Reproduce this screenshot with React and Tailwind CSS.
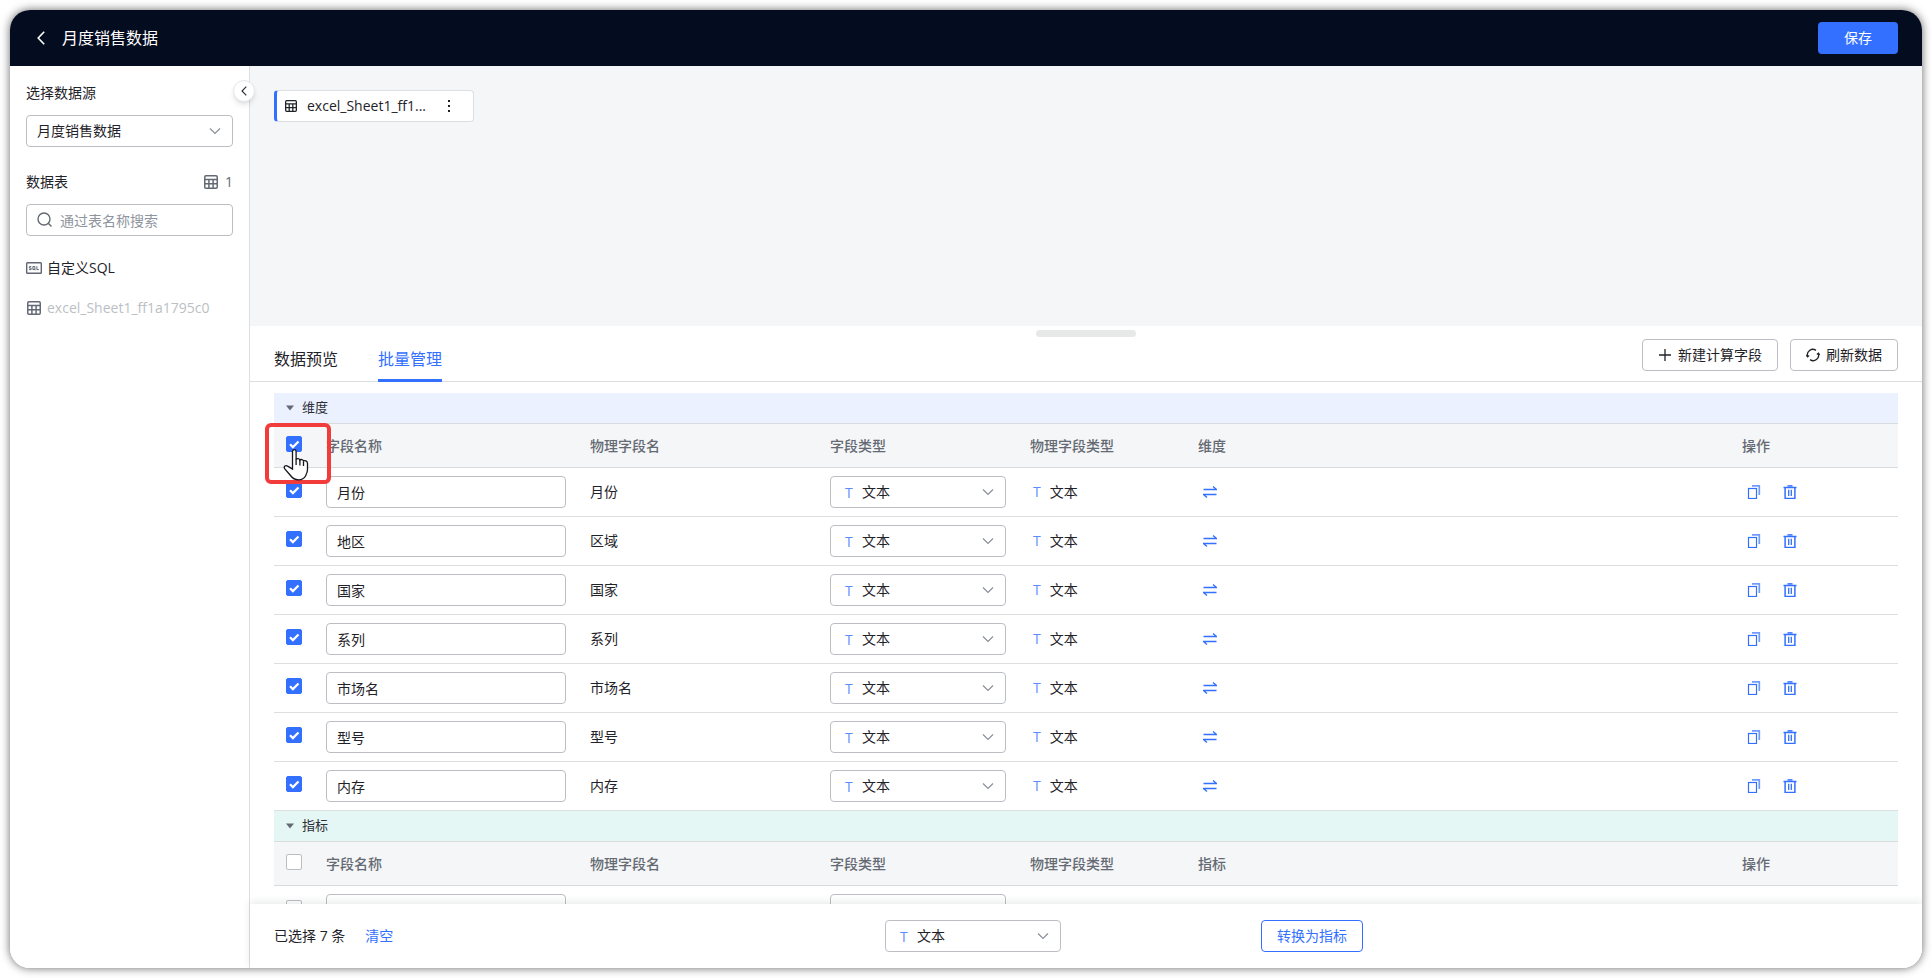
import { useState } from 'react';

const DIMENSIONS = [
  { id: 1, name: '月份', physical: '月份' },
  { id: 2, name: '地区', physical: '区域' },
  { id: 3, name: '国家', physical: '国家' },
  { id: 4, name: '系列', physical: '系列' },
  { id: 5, name: '市场名', physical: '市场名' },
  { id: 6, name: '型号', physical: '型号' },
  { id: 7, name: '内存', physical: '内存' },
];

const METRICS = [{ id: 8, name: '', physical: '' }];

function TableIcon({ className }) {
  return (
    <svg viewBox="0 0 14 14" fill="none" stroke="currentColor" strokeWidth="1.5" className={className}>
      <rect x="0.75" y="0.75" width="12.5" height="12.5" rx="1.2" />
      <path d="M0.7 4.5h12.6M0.7 8.8h12.6M4.9 4.5v8.8M9.1 4.5v8.8" />
    </svg>
  );
}

function SqlIcon() {
  return (
    <svg viewBox="0 0 16 14" fill="none" stroke="#5f6672" className="h-[14px] w-4 shrink-0">
      <rect x="0.7" y="1.7" width="14.600" height="10.600" rx="0.8" strokeWidth="1.4" />
      <path d="M5.3 5.6H3.4v1.5h1.7v1.5H3.1M6.9 5.6h2v3h-2zM8.2 7.8l1.2 1.4M10.9 5.2v3.400h2" strokeWidth="1" />
    </svg>
  );
}

function Chevron({ className }) {
  return (
    <svg viewBox="0 0 12 12" fill="none" stroke="#8a9099" strokeWidth="1.2" className={className}>
      <path d="M1 3.5 6 8.5l5-5" />
    </svg>
  );
}

function LeftIcon({ className }) {
  return (
    <svg viewBox="0 0 8 14" fill="none" stroke="currentColor" strokeWidth="1.6" className={className}>
      <path d="M7.2 0.8 1.2 7l6 6.2" />
    </svg>
  );
}

function SwapIcon() {
  return (
    <svg viewBox="0 0 14 14" fill="none" stroke="currentColor" strokeWidth="1.3" className="size-[14px]">
      <path d="M0.5 4.500h13L10 1.400M13.5 9.500H0.5L4 12.600" />
    </svg>
  );
}

function CopyIcon() {
  return (
    <svg viewBox="0 0 14 14" fill="none" stroke="currentColor" className="size-[14px]">
      <rect x="1.500" y="3.500" width="8" height="10" strokeWidth="1.200" />
      <path d="M5 0.900h7.300v9.100" strokeWidth="1.700" opacity="0.7" />
    </svg>
  );
}

function TrashIcon() {
  return (
    <svg viewBox="0 0 14 14" fill="none" stroke="currentColor" className="size-[14px]">
      <path d="M0.500 2.500h13M2.100 2.500v10.900h9.800v-10.900" strokeWidth="1.500" />
      <path d="M4.500 0.900h5" strokeWidth="1.500" />
      <path d="M5.700 4.800v6.200M8.300 4.800v6.200" strokeWidth="1.300" />
    </svg>
  );
}

function Checkbox({ checked, onChange, label }) {
  return (
    <span className="relative mb-1 block size-4">
      <input
        type="checkbox"
        aria-label={label}
        checked={checked}
        onChange={onChange}
        className="block size-4 appearance-none rounded-xs border border-[#bbbfc4] bg-white checked:border-[#3370ff] checked:bg-[#3370ff]"
      />
      {checked && (
        <svg viewBox="0 0 16 16" fill="none" stroke="#fff" strokeWidth="2.200" className="pointer-events-none absolute inset-0 size-4">
          <path d="m4 8.200 2.900 2.900 5.600-5.600" />
        </svg>
      )}
    </span>
  );
}

function TypeSelect({ label, empty }) {
  return (
    <div className="relative w-44">
      {!empty && (
        <span className="pointer-events-none absolute top-[7px] left-[15px] text-sm leading-5 font-medium text-[#5c8dff]">T</span>
      )}
      <select
        aria-label={label}
        className="block h-8 w-full appearance-none rounded-sm border border-[#bbbfc4] bg-white pr-8 pl-[31px] text-sm text-[#1f2329]"
      >
        {empty && <option></option>}
        <option>文本</option>
        <option>数值</option>
        <option>日期</option>
      </select>
      <Chevron className="pointer-events-none absolute top-[10px] right-3 size-3" />
    </div>
  );
}

function ClickHint() {
  return (
    <div className="pointer-events-none absolute -top-px -left-[9px] z-10 h-[61px] w-[66px] rounded-md border-4 border-[#f23c3c]">
      <svg viewBox="0 0 26 32" className="absolute top-[22px] left-[14px] h-8 w-[26px]">
        <path
          d="M9.500 2.500c0-2.400 3.600-2.400 3.600 0v8c.6-1.400 3.600-1.200 3.800.6.8-1 3.400-.8 3.600.9 1.200-.8 4-.3 4 2.400v6c0 3-.9 4.400-2 6.600-1.200 2.400-3.500 3.800-7 3.800-4 0-6-1.500-8-4.300L1.800 19.800c-1.500-2.200.8-4.100 2.800-2.700l4.900 3z"
          fill="#fff"
          stroke="#16161f"
          strokeWidth="1.300"
        />
        <path d="M13.100 10v6M16.900 11v5.500M20.500 12.500V17" stroke="#16161f" strokeWidth="1.300" />
      </svg>
    </div>
  );
}

function FieldSection({ title, titleClass, rows, selected, onToggle, onToggleAll, hint }) {
  const allChecked = rows.every((row) => selected.includes(row.id));

  return (
    <section>
      <h2>
        <button className={`flex h-[30px] w-full items-center gap-2 pl-3 text-[13px] text-[#2b2f36] ${titleClass}`}>
          <svg viewBox="0 0 8 6" className="h-[6px] w-2" fill="#646a73">
            <path d="M0 0.500h8L4 5.500z" />
          </svg>
          {title}
        </button>
      </h2>
      <table className="w-full table-fixed border-separate border-spacing-0 text-left text-sm text-[#1f2329]">
        <thead className="bg-[#f5f6f7] text-[#646a73]">
          <tr className="h-[45px] *:border-y *:border-[#d9dbde] *:px-3 *:py-0 *:font-medium">
            <th className="relative w-10">
              <Checkbox checked={allChecked} onChange={onToggleAll} label={`全选${title}`} />
              {hint && <ClickHint />}
            </th>
            <th className="w-[264px]">字段名称</th>
            <th className="w-60">物理字段名</th>
            <th className="w-[200px]">字段类型</th>
            <th className="w-[168px]">物理字段类型</th>
            <th>{title}</th>
            <th className="w-[168px]">操作</th>
          </tr>
        </thead>
        <tbody>
          {rows.map((row) => (
            <tr key={row.id} className="h-[49px] *:border-b *:border-[#dcdee1] *:px-3 *:py-0">
              <td>
                <Checkbox checked={selected.includes(row.id)} onChange={() => onToggle(row.id)} label={`选择${row.name}`} />
              </td>
              <td>
                <input
                  aria-label={`${row.name}字段名称`}
                  defaultValue={row.name}
                  className="block h-8 w-full rounded-sm border border-[#bbbfc4] bg-white px-[10px]"
                />
              </td>
              <td>{row.physical}</td>
              <td>
                <TypeSelect label={`${row.name}字段类型`} empty={!row.name} />
              </td>
              <td>
                {row.physical && (
                  <>
                    <span className="mr-[9px] ml-[3px] font-medium text-[#5c8dff]">T</span>
                    文本
                  </>
                )}
              </td>
              <td>
                {row.name && (
                  <button aria-label="转换" className="ml-[5px] block text-[#3370ff]">
                    <SwapIcon />
                  </button>
                )}
              </td>
              <td>
                {row.name && (
                  <div className="flex gap-[22px] pl-[5px] text-[#3370ff]">
                    <button aria-label="复制">
                      <CopyIcon />
                    </button>
                    <button aria-label="删除">
                      <TrashIcon />
                    </button>
                  </div>
                )}
              </td>
            </tr>
          ))}
        </tbody>
      </table>
    </section>
  );
}

function Sidebar() {
  return (
    <aside className="relative w-60 shrink-0 border-r border-[#dcdee1] bg-white px-4 pt-4 text-sm text-[#1f2329]">
      <button
        aria-label="收起"
        className="absolute top-[14px] -right-[6px] z-10 flex size-[22px] items-center justify-center rounded-full border border-[#e4e6e9] bg-white text-[#2b2f36] shadow-md"
      >
        <LeftIcon className="h-[10px] w-[6px]" />
      </button>
      <label htmlFor="source" className="block leading-[22px]">
        选择数据源
      </label>
      <div className="relative mt-[11px]">
        <select id="source" className="block h-8 w-full appearance-none rounded-sm border border-[#bbbfc4] bg-white px-[10px]">
          <option>月度销售数据</option>
        </select>
        <Chevron className="pointer-events-none absolute top-[10px] right-3 size-3" />
      </div>
      <div className="mt-6 flex items-center leading-[22px]">
        <label htmlFor="search" className="flex-1">
          数据表
        </label>
        <TableIcon className="size-[14px] text-[#646a73]" />
        <span className="ml-[7px] text-[#646a73]">1</span>
      </div>
      <div className="relative mt-[11px]">
        <svg viewBox="0 0 16 16" fill="none" stroke="#646a73" strokeWidth="1.400" className="absolute top-2 left-[11px] size-4">
          <circle cx="7" cy="7" r="6" />
          <path d="m11.200 11.200 3.300 3.300" />
        </svg>
        <input
          id="search"
          placeholder="通过表名称搜索"
          className="block h-8 w-full rounded-sm border border-[#bbbfc4] pl-[33px] placeholder:text-[#8f959e]"
        />
      </div>
      <ul className="mt-3">
        <li className="flex h-10 items-center gap-[5px]">
          <SqlIcon />
          自定义SQL
        </li>
        <li className="flex h-10 items-center gap-[6px] pl-px text-[#bbbfc4]">
          <TableIcon className="size-[14px] text-[#646a73]" />
          excel_Sheet1_ff1a1795c0
        </li>
      </ul>
    </aside>
  );
}

export default function App() {
  const [selected, setSelected] = useState(DIMENSIONS.map((d) => d.id));

  const toggle = (id) => setSelected((cur) => (cur.includes(id) ? cur.filter((x) => x !== id) : [...cur, id]));

  const toggleAll = (rows) => {
    const ids = rows.map((row) => row.id);
    const all = ids.every((id) => selected.includes(id));
    const rest = selected.filter((id) => !ids.includes(id));
    setSelected(all ? rest : [...rest, ...ids]);
  };

  return (
    <div className="h-screen bg-white p-[10px] font-['Open_Sans','Noto_Sans_CJK_SC',sans-serif]">
      <div className="flex h-full flex-col overflow-hidden rounded-[20px] shadow-[0_0_10px_rgba(0,0,0,0.6)]">
        <header className="flex h-14 shrink-0 items-center bg-[#040c1f] px-6 text-white">
          <button aria-label="返回" className="ml-[3px]">
            <LeftIcon className="h-[14px] w-2" />
          </button>
          <h1 className="ml-[17px] flex-1 text-base">月度销售数据</h1>
          <button className="h-8 w-20 rounded-sm bg-[#3370ff] text-sm">保存</button>
        </header>

        <div className="flex min-h-0 flex-1">
          <Sidebar />

          <main className="flex min-w-0 flex-1 flex-col bg-white">
            <div className="h-[260px] shrink-0 bg-[#f5f6f7] px-6 pt-6">
              <div className="flex h-8 w-[200px] items-center rounded-sm border border-l-3 border-[#dcdee1] border-l-[#3370ff] bg-white text-sm text-[#1f2329]">
                <TableIcon className="ml-2 size-3 shrink-0" />
                <span className="ml-[10px] w-[122px] whitespace-nowrap">excel_Sheet1_ff1...</span>
                <button aria-label="更多" className="ml-[18px]">
                  <svg viewBox="0 0 4 12" className="h-3 w-1" fill="currentColor">
                    <path d="M1 0h2v2H1zM1 5h2v2H1zM1 10h2v2H1z" />
                  </svg>
                </button>
              </div>
            </div>

            <div className="relative flex h-14 shrink-0 items-end border-b border-[#dcdee1] px-6">
              <div className="absolute top-1 left-1/2 h-[7px] w-[100px] -translate-x-1/2 rounded-full bg-[#e7e9e8]" />
              <nav className="-mb-px flex gap-10 text-base">
                <button className="h-[43px] border-b-3 border-transparent text-[#1f2329]">数据预览</button>
                <button className="h-[43px] border-b-3 border-[#3370ff] text-[#3370ff]">批量管理</button>
              </nav>
              <div className="mb-[10px] ml-auto flex gap-3 text-sm text-[#1f2329]">
                <button className="flex h-8 items-center gap-[6px] rounded-sm border border-[#bbbfc4] px-[15px]">
                  <svg viewBox="0 0 14 14" stroke="currentColor" strokeWidth="1.300" className="size-[14px]">
                    <path d="M7 1v12M1 7h12" />
                  </svg>
                  新建计算字段
                </button>
                <button className="flex h-8 items-center gap-[6px] rounded-sm border border-[#bbbfc4] px-[15px]">
                  <svg viewBox="0 0 14 14" fill="none" stroke="currentColor" strokeWidth="1.300" className="size-[14px]">
                    <path d="M1.600 8.600A5.500 5.500 0 0 1 10 2.400M12.400 5.400A5.500 5.500 0 0 1 4 11.600" />
                    <path d="M0.300 7.200l1.300 1.600 1.500-1.200M13.700 6.800l-1.300-1.600-1.500 1.200" />
                  </svg>
                  刷新数据
                </button>
              </div>
            </div>

            <div className="min-h-0 flex-1 overflow-hidden px-6 pt-[11px]">
              <FieldSection
                title="维度"
                titleClass="bg-[#ebf1ff]"
                rows={DIMENSIONS}
                selected={selected}
                onToggle={toggle}
                onToggleAll={() => toggleAll(DIMENSIONS)}
                hint
              />
              <FieldSection
                title="指标"
                titleClass="bg-[#e5f7f4]"
                rows={METRICS}
                selected={selected}
                onToggle={toggle}
                onToggleAll={() => toggleAll(METRICS)}
              />
            </div>

            <footer className="z-10 flex h-16 shrink-0 items-center bg-white px-6 text-sm shadow-[0_-2px_8px_rgba(31,35,41,0.1)]">
              <div className="flex w-[611px] gap-5">
                <span className="text-[#1f2329]">已选择 {selected.length} 条</span>
                <button className="text-[#3370ff]" onClick={() => setSelected([])}>
                  清空
                </button>
              </div>
              <TypeSelect label="批量字段类型" />
              <button className="ml-[200px] h-8 rounded-sm border border-[#3370ff] px-[15px] text-[#3370ff]">转换为指标</button>
            </footer>
          </main>
        </div>
      </div>
    </div>
  );
}
